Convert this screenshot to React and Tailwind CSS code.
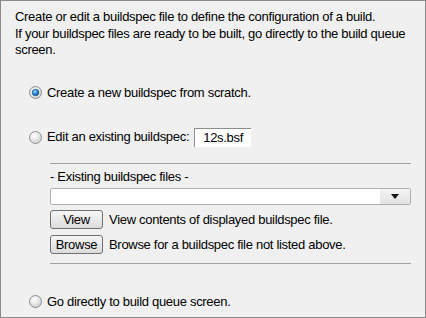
import React, { useState } from "react";

const Radio = ({ checked }) => (
  <svg width="13" height="13" viewBox="0 0 13 13" className="shrink-0">
    <defs>
      <radialGradient id="rbg" cx="40%" cy="35%" r="70%">
        <stop offset="0%" stopColor="#ffffff" />
        <stop offset="100%" stopColor="#cfcfcf" />
      </radialGradient>
      <radialGradient id="rdot" cx="40%" cy="35%" r="70%">
        <stop offset="0%" stopColor="#9ad8ff" />
        <stop offset="60%" stopColor="#1f7fd0" />
        <stop offset="100%" stopColor="#0d4f8c" />
      </radialGradient>
    </defs>
    <circle cx="6.5" cy="6.5" r="6" fill="url(#rbg)" stroke="#8e8f8f" strokeWidth="1" />
    {checked && <circle cx="6.5" cy="6.5" r="3.3" fill="url(#rdot)" stroke="#1a4f7f" strokeWidth="0.6" />}
  </svg>
);

const Button = ({ children }) => (
  <button className="w-[53px] h-[19px] shrink-0 rounded-[3px] border border-[#707070] bg-gradient-to-b from-[#f6f6f6] to-[#dcdcdc] text-[13px] tracking-[-0.3px] leading-none text-black">
    {children}
  </button>
);

const App = () => {
  const [choice, setChoice] = useState("new");
  const [fileName, setFileName] = useState("12s.bsf");

  return (
    <div
      className="w-[426px] h-[318px] border border-[#8a8a8a] bg-[#f0f0f0] text-[13px] tracking-[-0.3px] text-black overflow-hidden"
      style={{ fontFamily: '"Liberation Sans", Arial, sans-serif' }}
    >
      {/* Intro text */}
      <p className="pt-[8px] pl-[14px] leading-[16.5px] whitespace-nowrap">
        Create or edit a buildspec file to define the configuration of a build.
        <br />
        If your buildspec files are ready to be built, go directly to the build queue
        <br />
        screen.
      </p>

      {/* New from scratch */}
      <label
        className="mt-[26px] ml-[28px] flex items-center gap-[5px] h-[16px]"
        onClick={() => setChoice("new")}
      >
        <Radio checked={choice === "new"} />
        <span>Create a new buildspec from scratch.</span>
      </label>

      {/* Edit existing */}
      <div className="mt-[27px] ml-[28px] flex items-center h-[19px]">
        <label className="flex items-center gap-[5px]" onClick={() => setChoice("edit")}>
          <Radio checked={choice === "edit"} />
          <span>Edit an existing buildspec:</span>
        </label>
        <input
          value={fileName}
          onChange={(e) => setFileName(e.target.value)}
          className="ml-[5px] w-[57px] h-[19px] bg-white border-t border-l border-[#8f8f8f] pl-[8px] pr-0 text-[13px] tracking-[-0.3px] outline-none"
        />
      </div>

      {/* Existing files group */}
      <div className="ml-[49px] w-[361px] mt-[16px]">
        <div className="h-px bg-[#a0a0a0]" />
        <div className="mt-[5px] leading-[16px]">- Existing buildspec files -</div>
        <div className="mt-[3px] h-[17px] flex border border-[#b0b0b0] rounded-[2px] bg-white">
          <div className="flex-1" />
          <div className="w-[30px] flex items-center justify-center bg-gradient-to-b from-[#f4f4f4] to-[#e2e2e2]">
            <svg width="8" height="5" viewBox="0 0 8 5">
              <path d="M0 0h8L4 5z" fill="#111" />
            </svg>
          </div>
        </div>
        <div className="mt-[5px] flex items-center gap-[6px]">
          <Button>View</Button>
          <span>View contents of displayed buildspec file.</span>
        </div>
        <div className="mt-[6px] flex items-center gap-[6px]">
          <Button>Browse</Button>
          <span>Browse for a buildspec file not listed above.</span>
        </div>
        <div className="mt-[8px] h-px bg-[#a0a0a0]" />
      </div>

      {/* Go to build queue */}
      <label
        className="mt-[30px] ml-[28px] flex items-center gap-[5px] h-[16px]"
        onClick={() => setChoice("queue")}
      >
        <Radio checked={choice === "queue"} />
        <span>Go directly to build queue screen.</span>
      </label>
    </div>
  );
};

export default App;
